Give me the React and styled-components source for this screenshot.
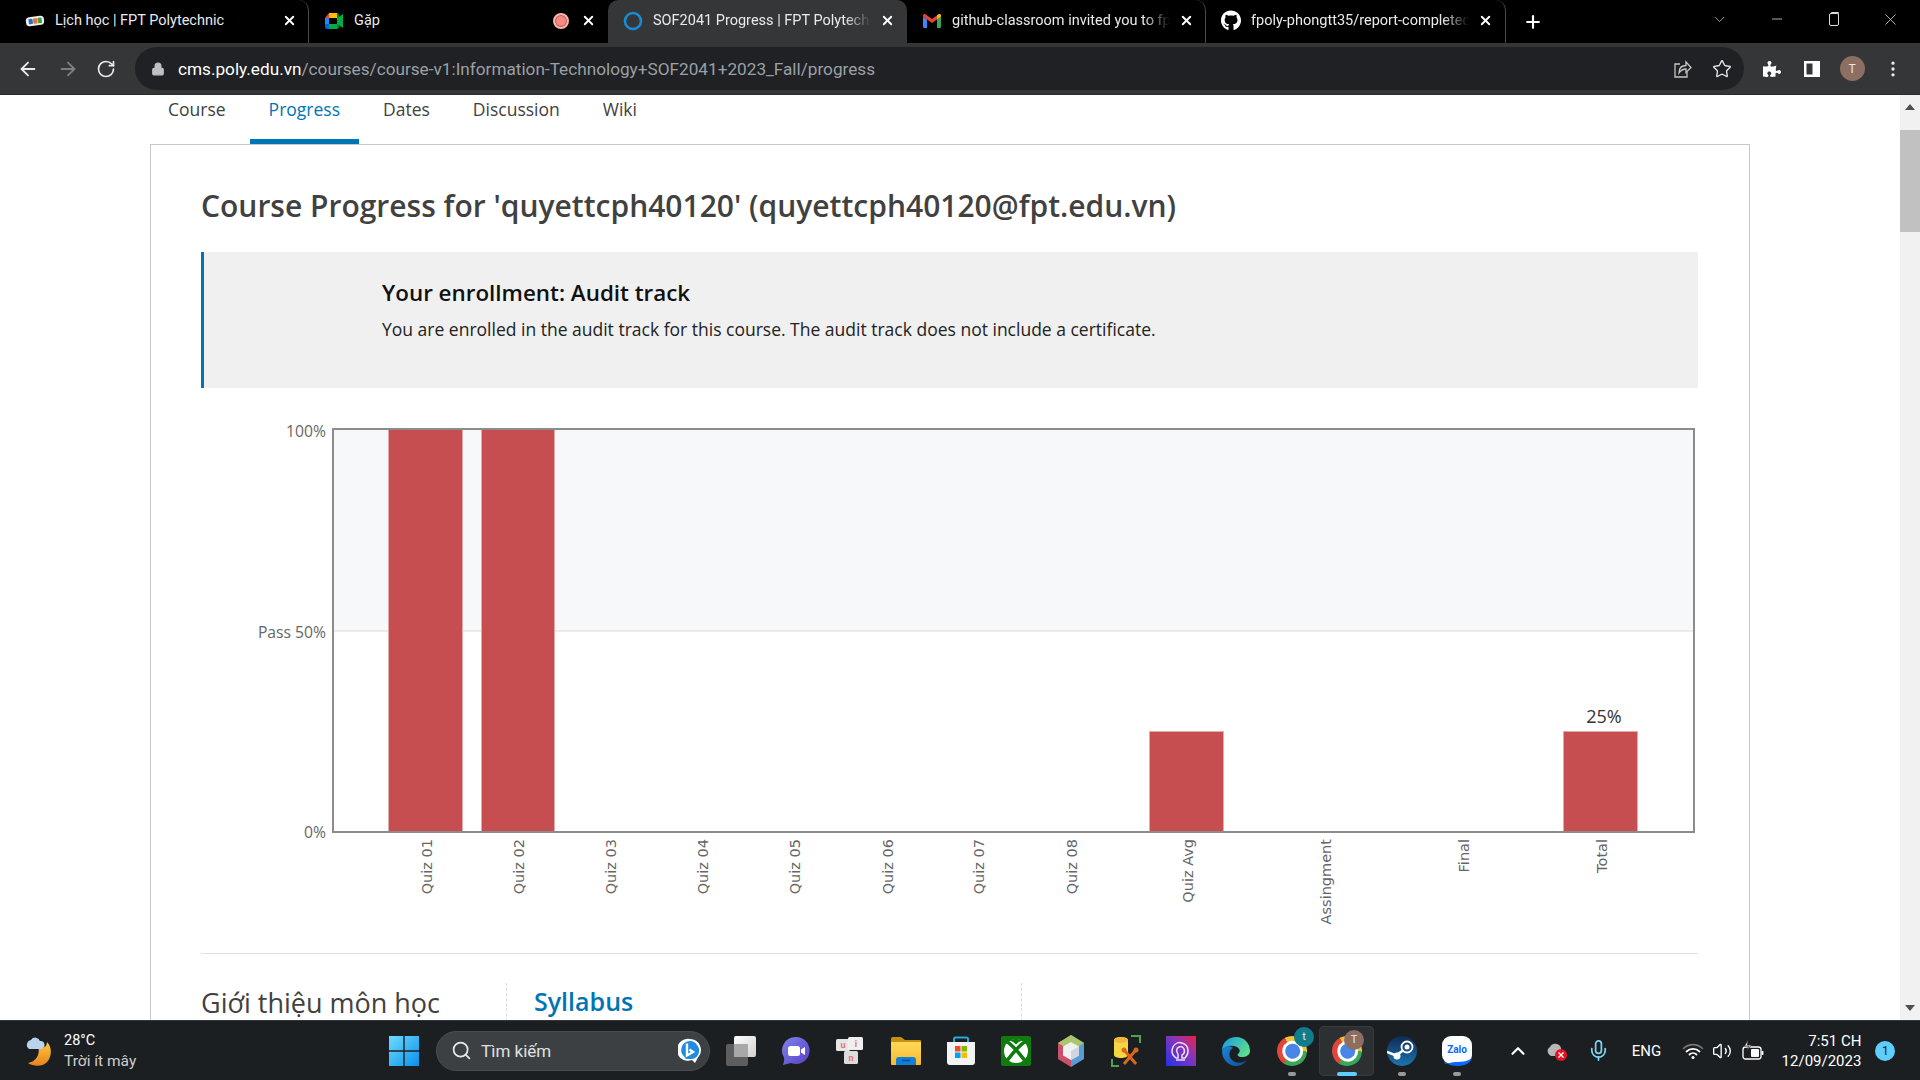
import React from 'react';
import styled, { createGlobalStyle } from 'styled-components';
import { FaGithub, FaPuzzlePiece } from 'react-icons/fa';
import { ArrowLeft, ArrowRight, RotateCw, Lock, Star, MoreVertical, Search, ChevronUp, ChevronDown, Minus, X, Plus, Mic, Volume2 } from 'lucide-react';

const GlobalStyle = createGlobalStyle`
  html, body { margin: 0; padding: 0; height: 100%; overflow: hidden; background: #fff; }
  * { box-sizing: border-box; }
`;

const Screen = styled.div`
  width: 1920px;
  height: 1080px;
  display: flex;
  flex-direction: column;
  overflow: hidden;
  font-family: "Open Sans", "Noto Sans", sans-serif;
`;

/* browser chrome */
const TabStrip = styled.div`
  height: 43px;
  flex: none;
  background: #000;
  display: flex;
  padding-left: 10px;
  font-family: Roboto, "Noto Sans", sans-serif;
`;

const Tab = styled.div`
  width: ${p => p.$w || 299}px;
  height: 43px;
  flex: none;
  position: relative;
  display: flex;
  align-items: center;
  padding: 0 0 2px 15px;
  color: #e8eaed;
  font-size: 14.5px;
  background: ${p => (p.$active ? '#353637' : 'transparent')};
  border-radius: 10px 10px 0 0;
  border-right: ${p => (p.$sep ? '1px solid #4a4a4a' : 'none')};
  background-clip: padding-box;
`;

const TabIcon = styled.span`
  width: 20px;
  height: 20px;
  flex: none;
  display: flex;
  align-items: center;
  justify-content: center;
  margin-right: 10px;
`;

const TabTitle = styled.span`
  width: ${p => p.$w || 214}px;
  white-space: nowrap;
  overflow: hidden;
  -webkit-mask-image: ${p => (p.$fade ? 'linear-gradient(to right, #000 88%, transparent 100%)' : 'none')};
`;

const TabClose = styled.span`
  position: absolute;
  left: 272px;
  top: 13px;
  width: 15px;
  height: 15px;
  display: flex;
  align-items: center;
  justify-content: center;
  color: #fff;
`;

const RecordDot = styled.span`
  position: absolute;
  left: 244px;
  top: 13px;
  width: 16px;
  height: 16px;
  border-radius: 50%;
  background: #f28b82;
  border: 2px solid #f6b6b0;
  box-shadow: inset 0 0 0 1px #c5524a;
`;

const TabPlus = styled.div`
  width: 54px;
  display: flex;
  align-items: center;
  justify-content: center;
  color: #fff;
`;

const WindowControls = styled.div`
  margin-left: auto;
  display: flex;
  align-items: center;
  height: 38px;
  color: #dcdcdc;
  padding-right: 1px;
`;

const WindowButton = styled.span`
  width: ${p => p.$w || 57}px;
  display: flex;
  justify-content: center;
`;

const RestoreIcon = styled.span`
  width: 10px;
  height: 13px;
  border: 1px solid #dcdcdc;
  border-radius: 2px;
  box-shadow: 1px -2px 0 -1px #dcdcdc;
`;

const Toolbar = styled.div`
  height: 52px;
  flex: none;
  background: #353637;
  border-bottom: 1px solid #2a2a2a;
  display: flex;
  align-items: center;
  font-family: Roboto, "Noto Sans", sans-serif;
`;

const NavIcon = styled.span`
  width: ${p => p.$w || 40}px;
  flex: none;
  margin-left: ${p => p.$ml || 0}px;
  display: flex;
  justify-content: center;
  color: ${p => p.$color || '#e8eaed'};
`;

const Omnibox = styled.div`
  width: 1609px;
  height: 43px;
  margin-left: 7px;
  border-radius: 22px;
  background: #202124;
  display: flex;
  align-items: center;
  padding-left: 16px;
  flex: none;
`;

const UrlText = styled.div`
  font-size: 17.2px;
  color: #9aa0a6;
  margin-left: 13px;
  white-space: nowrap;
  b { font-weight: 400; color: #fff; }
`;

const OmniActions = styled.div`
  margin-left: auto;
  display: flex;
  align-items: center;
  color: #c4c7c5;
  padding-right: 2px;
`;

const Avatar = styled.span`
  width: 25px;
  height: 25px;
  border-radius: 50%;
  background: #8d6e63;
  color: #f1e6e0;
  font-size: 12px;
  display: flex;
  align-items: center;
  justify-content: center;
`;

/* page body */
const Viewport = styled.div`
  flex: 1;
  min-height: 0;
  display: flex;
  background: #fff;
`;

const Page = styled.div`
  flex: 1;
  min-width: 0;
  overflow: hidden;
  padding-left: 150px;
`;

const CourseNav = styled.nav`
  height: 49px;
  margin-left: -1px;
  display: flex;
  gap: 5px;
`;

const NavTab = styled.a`
  height: 49px;
  padding: 1px 19px 0;
  font-size: 17.5px;
  line-height: 26px;
  color: ${p => (p.$active ? '#0075b4' : '#414141')};
  border-bottom: 5px solid ${p => (p.$active ? '#0075b4' : 'transparent')};
`;

const Card = styled.section`
  width: 1600px;
  border: 1px solid #c8c8c8;
  padding: 0 50px;
  min-height: 900px;
`;

const PageTitle = styled.h1`
  margin: 42px 0 0;
  font-size: 30px;
  line-height: 38px;
  font-weight: 600;
  color: #414141;
  white-space: nowrap;
`;

const Banner = styled.div`
  margin-top: 27px;
  height: 136px;
  width: 1497px;
  background: #f0f0f0;
  border-left: 3px solid #0075b4;
  padding: 25px 0 0 178px;
`;

const BannerTitle = styled.div`
  font-size: 22.4px;
  line-height: 32px;
  font-weight: 600;
  color: #111;
`;

const BannerText = styled.div`
  margin-top: 8px;
  font-size: 17.5px;
  line-height: 24px;
  color: #222;
`;

const ChartBox = styled.svg`
  display: block;
  margin-top: 22px;
`;

const Divider = styled.hr`
  margin: 13px 0 0;
  border: 0;
  border-top: 1px solid #e2e2e2;
  width: 1497px;
`;

const Columns = styled.div`
  margin-top: 29px;
  display: flex;
`;

const SideHeading = styled.div`
  width: 305px;
  font-size: 27px;
  line-height: 40px;
  font-weight: 400;
  color: #414141;
`;

const MainColumn = styled.div`
  width: 516px;
  height: 120px;
  padding-left: 27px;
  border-left: 1px dashed #d9d9d9;
  border-right: 1px dashed #d9d9d9;
`;

const SyllabusLink = styled.a`
  display: block;
  margin-top: -1px;
  font-size: 25px;
  line-height: 38px;
  font-weight: 600;
  color: #0075b4;
`;

const Scrollbar = styled.div`
  width: 20px;
  flex: none;
  background: #f1f1f1;
  display: flex;
  flex-direction: column;
`;

const ScrollArrow = styled.div`
  height: 24px;
  flex: none;
  display: flex;
  align-items: center;
  justify-content: center;
  margin-top: ${p => (p.$down ? 'auto' : '0')};
  &::after {
    content: '';
    border-left: 5px solid transparent;
    border-right: 5px solid transparent;
    ${p => (p.$down ? 'border-top: 6px solid #505050;' : 'border-bottom: 6px solid #505050;')}
  }
`;

const ScrollThumb = styled.div`
  height: 102px;
  margin-top: 11px;
  background: #c1c1c1;
`;

/* taskbar */
const Taskbar = styled.footer`
  height: 60px;
  flex: none;
  background: #1c1f22;
  border-top: 1px solid #33363a;
  display: flex;
  align-items: center;
  font-family: Roboto, "Noto Sans", sans-serif;
  color: #fff;
`;

const Weather = styled.div`
  width: 376px;
  flex: none;
  display: flex;
  align-items: center;
  padding-left: 24px;
  gap: 8px;
`;

const WeatherText = styled.div`
  font-size: 14.500px;
  line-height: 20px;
  small { display: block; font-size: 15.5px; color: #d0d0d0; }
`;

const Slot = styled.div`
  position: relative;
  width: 55.1px;
  height: 50px;
  flex: none;
  display: flex;
  align-items: center;
  justify-content: center;
  border-radius: 5px;
  ${p => (p.$active ? 'background: #2d3033; box-shadow: inset 0 0 0 1px #383b3e;' : '')}
`;

const RunDot = styled.span`
  position: absolute;
  bottom: 0;
  left: 50%;
  transform: translateX(-50%);
  width: ${p => (p.$active ? 20 : 8)}px;
  height: 4px;
  border-radius: 2px;
  background: ${p => (p.$active ? '#60cdff' : '#9a9a9a')};
`;

const SearchBox = styled.div`
  width: 274px;
  height: 40px;
  flex: none;
  margin: 0 3px 0 5px;
  border-radius: 20px;
  background: #3d4043;
  border: 1px solid #4a4d50;
  display: flex;
  align-items: center;
  padding-left: 14px;
  gap: 9px;
  font-size: 17px;
  color: #e0e0e0;
  & > span { flex: 1; }
  & > svg:last-child { margin-right: 7px; }
`;

const ChromeBall = styled.span`
  width: 30px;
  height: 30px;
  border-radius: 50%;
  background: conic-gradient(#f2c230 0 120deg, #3aa757 120deg 240deg, #e2463a 240deg 360deg);
  transform: rotate(-28deg);
  display: flex;
  align-items: center;
  justify-content: center;
  &::after {
    content: '';
    width: 15px;
    height: 15px;
    border-radius: 50%;
    background: #4a86e8;
    border: 3px solid #fff;
  }
`;

const ChromeBadge = styled.span`
  position: absolute;
  top: ${p => p.$top}px;
  left: ${p => p.$left}px;
  width: 20px;
  height: 20px;
  border-radius: 50%;
  background: ${p => p.$bg};
  color: #e8e8e8;
  font-size: 11px;
  display: flex;
  align-items: center;
  justify-content: center;
`;

const Tray = styled.div`
  margin-left: 16px;
  display: flex;
  align-items: center;
`;

const TrayItem = styled.div`
  width: ${p => p.$w}px;
  flex: none;
  display: flex;
  justify-content: center;
  font-size: 15px;
  color: ${p => p.$color || '#fff'};
`;

const Clock = styled.div`
  width: 87px;
  text-align: right;
  font-size: 15px;
  line-height: 20px;
  white-space: nowrap;
`;

const NotifyWrap = styled.div`
  width: 48px;
  display: flex;
  justify-content: center;
`;

const NotifyBadge = styled.span`
  width: 20px;
  height: 20px;
  border-radius: 50%;
  background: #60cdff;
  color: #10222c;
  font-size: 12px;
  display: flex;
  align-items: center;
  justify-content: center;
`;

const FptIcon = () => (
  <svg width="22" height="14" viewBox="0 0 22 14">
    <g transform="rotate(-7 11 7)">
      <rect x="1" y="2" width="20" height="10" rx="4" fill="#f1f1f1" />
      <rect x="4" y="4" width="4.500" height="6" rx="1" fill="#2a6fc4" />
      <rect x="9" y="4" width="4.500" height="6" rx="1" fill="#e2762b" />
      <rect x="14" y="4" width="4.500" height="6" rx="1" fill="#43a047" />
    </g>
  </svg>
);

const MeetIcon = () => (
  <svg width="20" height="18" viewBox="0 0 20 18">
    <path d="M5 1h8v5H5z" fill="#fbbc04" />
    <path d="M1 6l4-5v5z" fill="#ea4335" />
    <path d="M1 6h4v6H1z" fill="#2684fc" />
    <path d="M1 12h4v5H3a2 2 0 0 1-2-2z" fill="#0066da" />
    <path d="M5 12h8v5H5z" fill="#00ac47" />
    <path d="M13 1v16l2-1V2z" fill="#00832d" />
    <path d="M13 6l6-4v14l-6-4z" fill="#00ac47" />
  </svg>
);

const GmailIcon = () => (
  <svg width="18" height="14" viewBox="0 0 18 14">
    <path d="M0 2.500L9 9l9-6.500v-1A1.500 1.500 0 0 0 15.600.300L9 5 2.400.300A1.500 1.500 0 0 0 0 1.500z" fill="#ea4335" />
    <path d="M0 2.500V12.500A1.500 1.500 0 0 0 1.500 14H4V5.400z" fill="#4285f4" />
    <path d="M18 2.500V12.500A1.500 1.500 0 0 1 16.500 14H14V5.400z" fill="#34a853" />
    <path d="M14 5.400L18 2.500v-1A1.500 1.500 0 0 0 15.600.300L14 1.500z" fill="#fbbc04" />
  </svg>
);

const ShareIcon = () => (
  <svg width="20" height="20" viewBox="0 0 20 20" fill="none" stroke="currentColor" strokeWidth="1.3">
    <path d="M8 5H3v13h12v-5" />
    <path d="M7 14c0-5 3-7.500 7-7.500V3l5 5.500-5 5V10c-3 0-5 1-7 4z" />
  </svg>
);

const SidePanelIcon = () => (
  <svg width="18" height="18" viewBox="0 0 18 18">
    <path d="M1 1h16v16H1z" fill="#fff" />
    <path d="M3.500 3.500h6v11h-6z" fill="#353637" />
  </svg>
);

const CloudMoon = () => (
  <svg width="32" height="38" viewBox="0 0 32 38">
    <defs>
      <linearGradient id="moon" x1="0" y1="0" x2="0" y2="1">
        <stop offset="0" stopColor="#ffc83d" />
        <stop offset="1" stopColor="#e8821e" />
      </linearGradient>
    </defs>
    <path d="M14 14c6 4 9 0 9-4 5 5 5 13 1 19-5 6-14 6-20 2 7-1 13-8 10-17z" fill="url(#moon)" />
    <path d="M5 17a5 5 0 0 1 2-9 5 5 0 0 1 9 1 4 4 0 0 1 1 8z" fill="#b9d3ec" />
  </svg>
);

const WinLogo = () => (
  <svg width="30" height="30" viewBox="0 0 30 30">
    <defs>
      <linearGradient id="win" x1="0" y1="0" x2="1" y2="1">
        <stop offset="0" stopColor="#6fdcff" />
        <stop offset="1" stopColor="#0a8fe8" />
      </linearGradient>
    </defs>
    <path d="M0 0h14.300v14.300H0zM15.700 0H30v14.300H15.700zM0 15.700h14.300V30H0zM15.700 15.700H30V30H15.700z" fill="url(#win)" />
  </svg>
);

const BingIcon = () => (
  <svg width="24" height="26" viewBox="0 0 24 26">
    <path d="M12 1a11 11 0 0 1 8 18.500L17 25l-3-3a11 11 0 1 1-2-21z" fill="#fff" />
    <path d="M12 3a9 9 0 0 0-6 15.500L8 21h6a8.500 8.500 0 0 0 5-14A9 9 0 0 0 12 3z" fill="#1f8ce0" />
    <path d="M9 5.500v12l6-3.500-3.500-2.500" fill="none" stroke="#fff" strokeWidth="2.400" />
  </svg>
);

const TaskViewIcon = () => (
  <svg width="30" height="30" viewBox="0 0 30 30">
    <defs>
      <linearGradient id="tvFront" x1="0" y1="0" x2="1" y2="1">
        <stop offset="0" stopColor="#fff" />
        <stop offset="1" stopColor="#d0d0d0" />
      </linearGradient>
    </defs>
    <rect x="8" y="0" width="22" height="21" rx="2" fill="url(#tvFront)" />
    <rect x="0" y="8" width="22" height="22" rx="2" fill="#5e5e5e" />
    <rect x="8" y="8" width="14" height="13" fill="#a8a8a8" />
  </svg>
);

const MeetChatIcon = () => (
  <svg width="30" height="30" viewBox="0 0 30 30">
    <defs>
      <linearGradient id="chat" x1="0" y1="0" x2="1" y2="1">
        <stop offset="0" stopColor="#7b83eb" />
        <stop offset="1" stopColor="#5b3fc4" />
      </linearGradient>
    </defs>
    <path d="M15 1a13.500 13.500 0 1 1-5 26L2 29c1-3 1.500-5 1-7.500A13.500 13.500 0 0 1 15 1z" fill="url(#chat)" />
    <rect x="7" y="10" width="12" height="10" rx="2.500" fill="#fff" />
    <path d="M20 13.500l4-2.500v8l-4-2.500z" fill="#fff" />
  </svg>
);

const KeysIcon = () => (
  <svg width="30" height="30" viewBox="0 0 30 30" fontFamily="Roboto, sans-serif" fontSize="9" fontWeight="700" fill="#e57373" textAnchor="middle">
    <rect x="0" y="3" width="14" height="12" rx="1.500" fill="#e6e6e6" />
    <rect x="12" y="1" width="15" height="13" rx="1.500" fill="#efefef" />
    <rect x="8" y="15" width="14" height="13" rx="1.500" fill="#dcdcdc" />
    <text x="7" y="12">u</text>
    <text x="20" y="11">i</text>
    <text x="15" y="25">n</text>
  </svg>
);

const FolderIcon = () => (
  <svg width="32" height="30" viewBox="0 0 32 30">
    <defs>
      <linearGradient id="folder" x1="0" y1="0" x2="0" y2="1">
        <stop offset="0" stopColor="#ffd95a" />
        <stop offset="1" stopColor="#f6b92f" />
      </linearGradient>
    </defs>
    <path d="M1 3a2 2 0 0 1 2-2h8l4 3h15a1 1 0 0 1 1 1v4H1z" fill="#c98f12" />
    <path d="M1 6h30v22a1 1 0 0 1-1 1H2a1 1 0 0 1-1-1z" fill="url(#folder)" />
    <path d="M6 24a3 3 0 0 1 3-3h14a3 3 0 0 1 3 3v5H6z" fill="#0f7fd8" />
    <path d="M12 24.500h8" stroke="#0a4f8f" strokeWidth="1.500" />
  </svg>
);

const StoreIcon = () => (
  <svg width="30" height="30" viewBox="0 0 30 30">
    <path d="M8 8V3a1.500 1.500 0 0 1 1.500-1.500h11A1.500 1.500 0 0 1 22 3v5" fill="none" stroke="#25a8e0" strokeWidth="2" />
    <path d="M1 6h28v20a3 3 0 0 1-3 3H4a3 3 0 0 1-3-3z" fill="#f3f3f3" />
    <rect x="9" y="10" width="5.500" height="5.500" fill="#f25022" />
    <rect x="15.500" y="10" width="5.500" height="5.500" fill="#7fba00" />
    <rect x="9" y="16.500" width="5.500" height="5.500" fill="#00a4ef" />
    <rect x="15.500" y="16.500" width="5.500" height="5.500" fill="#ffb900" />
  </svg>
);

const XboxIcon = () => (
  <svg width="30" height="30" viewBox="0 0 30 30">
    <rect width="30" height="30" rx="2" fill="#107c10" />
    <circle cx="15" cy="15" r="12" fill="#fff" />
    <path d="M5 5c5 3 14 13 20 21M25 5C20 8 11 18 5 26" fill="none" stroke="#107c10" strokeWidth="3.600" />
    <path d="M8 4.500c4 1 5.500 2.500 7 4 1.500-1.500 3-3 7-4-4-2-10-2-14 0z" fill="#107c10" />
  </svg>
);

const GemIcon = () => (
  <svg width="28" height="32" viewBox="0 0 28 32">
    <path d="M14 0l13 8v16l-13 8z" fill="#5b9bd5" />
    <path d="M14 0L1 8v16l13 8z" fill="#c9506a" />
    <path d="M14 0l13 8-13 8L1 8z" fill="#a8c66c" />
    <path d="M14 7l8 4.500v9L14 25l-8-4.500v-9z" fill="#f0f0f0" />
    <path d="M14 16v9l8-4.500v-9z" fill="#cfd6de" />
  </svg>
);

const ToolsIcon = () => (
  <svg width="30" height="32" viewBox="0 0 30 32">
    <path d="M1 24v7h7M20 1h9v7" fill="none" stroke="#4ea34e" strokeWidth="2" />
    <path d="M3 5c0-4 14-4 14 0v15c0 4-14 4-14 0z" fill="#f5d742" />
    <ellipse cx="10" cy="5" rx="7" ry="3" fill="#f3b63c" />
    <path d="M13 29l11-13M25 29L14 16" stroke="#d9661c" strokeWidth="3" />
    <circle cx="25" cy="15" r="2.500" fill="#d9661c" />
    <circle cx="13" cy="15" r="2.500" fill="#d9661c" />
  </svg>
);

const PurpleIcon = () => (
  <svg width="30" height="30" viewBox="0 0 30 30">
    <defs>
      <linearGradient id="pur" x1="0" y1="1" x2="1" y2="0">
        <stop offset="0" stopColor="#2233e8" />
        <stop offset="0.6" stopColor="#8a35b8" />
        <stop offset="1" stopColor="#ee2040" />
      </linearGradient>
    </defs>
    <rect width="30" height="30" fill="url(#pur)" />
    <path d="M10 22c-4-3-5-7-3-11 2-4 6-5 9-4 4 1 6 4 6 8 0 3-1 5-3 7h-3v-3c2-1 3-3 2-6-1-2-3-3-5-2-3 1-3 5-1 7v4z" fill="none" stroke="#f0dff2" strokeWidth="1.500" />
    <path d="M19 24h-9" stroke="#f0dff2" strokeWidth="1.500" />
  </svg>
);

const EdgeIcon = () => (
  <svg width="30" height="30" viewBox="0 0 30 30">
    <defs>
      <linearGradient id="edgeA" x1="0" y1="0.200" x2="1" y2="0.700">
        <stop offset="0" stopColor="#1b9de2" />
        <stop offset="1" stopColor="#5fe08a" />
      </linearGradient>
      <linearGradient id="edgeB" x1="0" y1="0" x2="1" y2="1">
        <stop offset="0" stopColor="#1f84d6" />
        <stop offset="1" stopColor="#0c4f9e" />
      </linearGradient>
    </defs>
    <path d="M1 15C1 6 8 1 15 1c9 0 14 7 14 14 0 4-4 6-8 6-4 0-5-2-4-3 2-2 3-4-1-7C10 8 2 11 1 15z" fill="url(#edgeA)" />
    <path d="M1 15c2-5 8-6 11-3-4 2-5 8-1 12 4 4 11 3 15 0-4 5-8 6-11 6C7 30 1 23 1 15z" fill="url(#edgeB)" />
  </svg>
);

const SteamIcon = () => (
  <svg width="30" height="32" viewBox="0 0 30 32">
    <defs>
      <linearGradient id="steam" x1="0" y1="0" x2="0" y2="1">
        <stop offset="0" stopColor="#0f2a55" />
        <stop offset="1" stopColor="#1a76b0" />
      </linearGradient>
    </defs>
    <circle cx="15" cy="16" r="15" fill="url(#steam)" />
    <circle cx="20" cy="12" r="5.500" fill="none" stroke="#fff" strokeWidth="1.800" />
    <circle cx="20" cy="12" r="2.500" fill="#fff" />
    <path d="M0 17l9 3.500 7-5" stroke="#fff" strokeWidth="2.500" fill="none" />
    <circle cx="10" cy="21" r="3.500" fill="#fff" />
  </svg>
);

const ZaloIcon = () => (
  <svg width="32" height="32" viewBox="0 0 32 32">
    <rect x="1" y="1" width="30" height="28" rx="9" fill="#fff" />
    <path d="M2 22c1 6 7 9 14 9s13-2 15-8c-4 3-9 4-15 4-3 0-5 0-7 1l-5 1z" fill="#0a68ff" />
    <text x="16" y="18" textAnchor="middle" fontFamily="Roboto, sans-serif" fontSize="10" fontWeight="700" fill="#0a68ff">Zalo</text>
  </svg>
);

const CloudX = () => (
  <svg width="22" height="22" viewBox="0 0 22 22">
    <path d="M5 16a5 5 0 0 1-1-9 6 6 0 0 1 11 1v8z" fill="#b8b8b8" />
    <circle cx="15" cy="15" r="6" fill="#e81123" />
    <path d="M12.500 12.500l5 5m0-5l-5 5" stroke="#fff" strokeWidth="1.400" />
  </svg>
);

const WifiIcon = () => (
  <svg width="22" height="18" viewBox="0 0 22 18" fill="none" strokeLinecap="round">
    <path d="M1.500 6.500a13.500 13.500 0 0 1 19 0" stroke="#777" strokeWidth="1.600" />
    <path d="M4.500 9.500a9.500 9.500 0 0 1 13 0" stroke="#fff" strokeWidth="1.800" />
    <path d="M7.500 12.500a5 5 0 0 1 7 0" stroke="#fff" strokeWidth="1.800" />
    <circle cx="11" cy="15.500" r="1.500" fill="#fff" />
  </svg>
);

const BatteryIcon = () => (
  <svg width="22" height="22" viewBox="0 0 22 22" fill="none" stroke="#fff" strokeWidth="1.300">
    <rect x="1" y="7" width="18" height="12" rx="2.500" fill="#1c1f22" />
    <path d="M20.500 11v4" strokeWidth="1.800" />
    <rect x="9" y="9" width="8" height="8" rx="1" fill="#fff" stroke="none" />
    <path d="M6 0L2.500 6H7L4.500 11 9.500 5H5.500z" fill="#fff" stroke="#1c1f22" strokeWidth="0.700" />
  </svg>
);

const barColor = '#c64e50';
const edgeColor = '#e4a9aa';
const baseY = 832;

const bars = [
  { x: 388, w: 75, top: 429 },
  { x: 481, w: 74, top: 429 },
  { x: 1149, w: 75, top: 731 },
  { x: 1563, w: 75, top: 731 },
];

const labels = [
  ['Quiz 01', 432], ['Quiz 02', 524], ['Quiz 03', 616], ['Quiz 04', 708],
  ['Quiz 05', 800], ['Quiz 06', 893], ['Quiz 07', 984], ['Quiz 08', 1077],
  ['Quiz Avg', 1193], ['Assingment', 1331], ['Final', 1469], ['Total', 1607],
];

const GradeChart = () => (
  <ChartBox width="1497" height="530" viewBox="201 410 1497 530">
    <rect x="333" y="429" width="1361" height="202" fill="#f7f8fa" />
    <line x1="333" y1="631" x2="1694" y2="631" stroke="#dcdcdc" />
    {bars.map(b => (
      <g key={b.x}>
        <rect x={b.x} y={b.top} width={b.w} height={baseY - b.top} fill={edgeColor} />
        <rect x={b.x + 1} y={b.top + 1} width={b.w - 2} height={baseY - 1 - b.top} fill={barColor} />
      </g>
    ))}
    <rect x="333" y="429" width="1361" height={baseY - 429} fill="none" stroke="#8c8c8c" strokeWidth="2" />
    <g fontFamily='"Open Sans", sans-serif' fontSize="15.700" fill="#666" textAnchor="end">
      <text x="326" y="437">100%</text>
      <text x="326" y="638">Pass 50%</text>
      <text x="326" y="838">0%</text>
    </g>
    <text x="1604" y="723" textAnchor="middle" fontFamily='"Open Sans", sans-serif' fontSize="18" fill="#333">25%</text>
    <g fontFamily='"DejaVu Sans", sans-serif' fontSize="14.500" fill="#666" textAnchor="end">
      {labels.map(([name, x]) => (
        <text key={name} transform={`translate(${x} 839) rotate(-90)`}>{name}</text>
      ))}
    </g>
  </ChartBox>
);

const tabIconClose = <X size={15} strokeWidth={3} />;

export default function App() {
  return (
    <>
      <GlobalStyle />
      <Screen>
        <TabStrip>
          <Tab $sep>
            <TabIcon><FptIcon /></TabIcon>
            <TabTitle>Lịch học | FPT Polytechnic</TabTitle>
            <TabClose>{tabIconClose}</TabClose>
          </Tab>
          <Tab>
            <TabIcon><MeetIcon /></TabIcon>
            <TabTitle>Gặp</TabTitle>
            <RecordDot />
            <TabClose>{tabIconClose}</TabClose>
          </Tab>
          <Tab $active>
            <TabIcon>
              <svg width="20" height="20" viewBox="0 0 20 20">
                <circle cx="10" cy="10" r="8" fill="none" stroke="#1a8ad4" strokeWidth="2.600" />
              </svg>
            </TabIcon>
            <TabTitle $fade $w={218}>SOF2041 Progress | FPT Polytechnic</TabTitle>
            <TabClose>{tabIconClose}</TabClose>
          </Tab>
          <Tab $sep>
            <TabIcon><GmailIcon /></TabIcon>
            <TabTitle $fade $w={218}>github-classroom invited you to fpoly</TabTitle>
            <TabClose>{tabIconClose}</TabClose>
          </Tab>
          <Tab $sep $w={300}>
            <TabIcon><FaGithub size={21} color="#fff" /></TabIcon>
            <TabTitle $fade $w={218}>fpoly-phongtt35/report-completed</TabTitle>
            <TabClose>{tabIconClose}</TabClose>
          </Tab>
          <TabPlus><Plus size={20} strokeWidth={2.600} /></TabPlus>
          <WindowControls>
            <WindowButton><ChevronDown size={17} strokeWidth={1} /></WindowButton>
            <WindowButton><Minus size={16} strokeWidth={1.200} /></WindowButton>
            <WindowButton><RestoreIcon /></WindowButton>
            <WindowButton><X size={19} strokeWidth={1} /></WindowButton>
          </WindowControls>
        </TabStrip>

        <Toolbar>
          <NavIcon $w={47} $ml={4}><ArrowLeft size={22} /></NavIcon>
          <NavIcon $w={33} $color="#7d7f82"><ArrowRight size={22} /></NavIcon>
          <NavIcon $w={44}><RotateCw size={20} /></NavIcon>
          <Omnibox>
            <Lock size={14} color="#bdc1c6" fill="#bdc1c6" />
            <UrlText><b>cms.poly.edu.vn</b>/courses/course-v1:Information-Technology+SOF2041+2023_Fall/progress</UrlText>
            <OmniActions>
              <NavIcon $w={40} $color="#c4c7c5"><ShareIcon /></NavIcon>
              <NavIcon $w={40} $color="#e8eaed"><Star size={20} strokeWidth={1.600} /></NavIcon>
            </OmniActions>
          </Omnibox>
          <NavIcon $w={56}><FaPuzzlePiece size={18} color="#fff" /></NavIcon>
          <NavIcon $w={24}><SidePanelIcon /></NavIcon>
          <NavIcon $w={56}><Avatar>T</Avatar></NavIcon>
          <NavIcon $w={26}><MoreVertical size={20} /></NavIcon>
        </Toolbar>

        <Viewport>
          <Page>
            <CourseNav>
              <NavTab>Course</NavTab>
              <NavTab $active>Progress</NavTab>
              <NavTab>Dates</NavTab>
              <NavTab>Discussion</NavTab>
              <NavTab>Wiki</NavTab>
            </CourseNav>
            <Card>
              <PageTitle>Course Progress for 'quyettcph40120' (quyettcph40120@fpt.edu.vn)</PageTitle>
              <Banner>
                <BannerTitle>Your enrollment: Audit track</BannerTitle>
                <BannerText>You are enrolled in the audit track for this course. The audit track does not include a certificate.</BannerText>
              </Banner>
              <GradeChart />
              <Divider />
              <Columns>
                <SideHeading>Giới thiệu môn học</SideHeading>
                <MainColumn>
                  <SyllabusLink>Syllabus</SyllabusLink>
                </MainColumn>
              </Columns>
            </Card>
          </Page>
          <Scrollbar>
            <ScrollArrow />
            <ScrollThumb />
            <ScrollArrow $down />
          </Scrollbar>
        </Viewport>

        <Taskbar>
          <Weather>
            <CloudMoon />
            <WeatherText>28°C<small>Trời ít mây</small></WeatherText>
          </Weather>
          <Slot><WinLogo /></Slot>
          <SearchBox>
            <Search size={21} color="#e8e8e8" />
            <span>Tìm kiếm</span>
            <BingIcon />
          </SearchBox>
          <Slot><TaskViewIcon /></Slot>
          <Slot><MeetChatIcon /></Slot>
          <Slot><KeysIcon /></Slot>
          <Slot><FolderIcon /></Slot>
          <Slot><StoreIcon /></Slot>
          <Slot><XboxIcon /></Slot>
          <Slot><GemIcon /></Slot>
          <Slot><ToolsIcon /></Slot>
          <Slot><PurpleIcon /></Slot>
          <Slot><EdgeIcon /></Slot>
          <Slot>
            <ChromeBall />
            <ChromeBadge $top={1} $left={30} $bg="#0f7d8c">t</ChromeBadge>
            <RunDot />
          </Slot>
          <Slot $active>
            <ChromeBall />
            <ChromeBadge $top={4} $left={25} $bg="#8d6e63">T</ChromeBadge>
            <RunDot $active />
          </Slot>
          <Slot><SteamIcon /><RunDot /></Slot>
          <Slot><ZaloIcon /><RunDot /></Slot>
          <Tray>
            <TrayItem $w={36}><ChevronUp size={22} strokeWidth={2.400} /></TrayItem>
            <TrayItem $w={42}><CloudX /></TrayItem>
            <TrayItem $w={40} $color="#7fd4f5"><Mic size={23} strokeWidth={1.800} /></TrayItem>
            <TrayItem $w={56}>ENG</TrayItem>
            <TrayItem $w={38}><WifiIcon /></TrayItem>
            <TrayItem $w={20}><Volume2 size={22} strokeWidth={1.600} /></TrayItem>
            <TrayItem $w={42}><BatteryIcon /></TrayItem>
            <Clock>7:51 CH<br />12/09/2023</Clock>
            <NotifyWrap><NotifyBadge>1</NotifyBadge></NotifyWrap>
          </Tray>
        </Taskbar>
      </Screen>
    </>
  );
}
